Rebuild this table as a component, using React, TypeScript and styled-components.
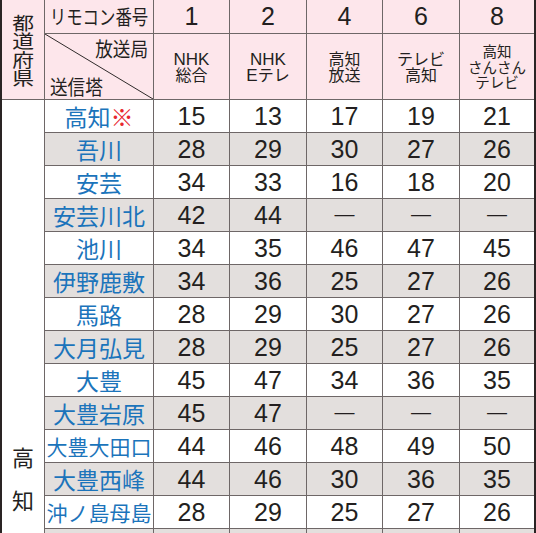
import React from "react";
import styled, { createGlobalStyle } from "styled-components";

const GlobalStyle = createGlobalStyle`
  html, body {
    margin: 0;
    padding: 0;
    overflow: hidden;
    background: #ffffff;
  }
`;

const LINE = "#6e6767";
const PINK = "#fde6eb";
const GRAY = "#e3dfdd";
const INK = "#231f20";
const BLUE = "#1b74bb";
const JP = `"Noto Sans CJK JP", "Noto Sans", sans-serif`;
const NUM = `"Liberation Sans", Arial, sans-serif`;

const Table = styled.div`
  width: 536px;
  box-sizing: border-box;
  display: grid;
  grid-template-columns: 42px 108px 75px 76px 75px 76px 74px;
  grid-template-rows: 33px 65px repeat(14, 32px);
  gap: 1px;
  background: ${LINE};
  border-left: 2px solid #2a2424;
  border-right: 2px solid #2a2424;
`;

const HeadCell = styled.div<{ $rowSpan?: number }>`
  background: ${PINK};
  display: flex;
  align-items: center;
  justify-content: center;
  color: ${INK};
  grid-row: span ${(p) => p.$rowSpan ?? 1};
  position: relative;
`;

const PrefHead = styled.div`
  display: flex;
  flex-direction: column;
  align-items: center;
  font-family: ${JP};
  font-size: 18.5px;
  color: ${INK};
`;

const PrefChar = styled.span`
  display: block;
  height: 18.5px;
  line-height: 18.5px;
  transform: scaleX(1.18);
`;

const RemoconLabel = styled.span`
  font-family: ${JP};
  font-size: 20px;
  line-height: 1;
  display: inline-block;
  transform: scaleX(0.82);
  white-space: nowrap;
`;

const ChannelNo = styled.span`
  font-family: ${NUM};
  font-size: 25px;
  line-height: 1;
`;

const Station = styled.div<{ $small?: boolean }>`
  display: flex;
  flex-direction: column;
  align-items: center;
  font-family: ${JP};
  font-size: ${(p) => (p.$small ? "14.5px" : "16px")};
  text-align: center;
`;

const StationLine = styled.span`
  display: block;
  height: 15.5px;
  line-height: 15.5px;
  white-space: nowrap;
`;

const Latin = styled.span`
  font-family: ${NUM};
  font-size: 17px;
`;

const DiagCell = styled.div`
  background: ${PINK};
  position: relative;
  font-family: ${JP};
  color: ${INK};
  display: flex;
  flex-direction: column;
  justify-content: space-between;
  padding: 5px 5px 2px 5px;
`;

const DiagLine = styled.svg`
  position: absolute;
  inset: 0;
  width: 100%;
  height: 100%;
`;

const DiagLabel = styled.span<{ $right?: boolean }>`
  font-size: 20px;
  line-height: 1;
  align-self: ${(p) => (p.$right ? "flex-end" : "flex-start")};
  transform: scaleX(0.88);
  transform-origin: ${(p) => (p.$right ? "right" : "left")} center;
  position: relative;
`;

const PrefBody = styled.div`
  background: #ffffff;
  grid-row: span 14;
  font-family: ${JP};
  font-size: 22px;
  line-height: 43px;
  color: ${INK};
  text-align: center;
  padding-top: 335px;
`;

const NameCell = styled.div<{ $gray: boolean; $tight?: boolean }>`
  background: ${(p) => (p.$gray ? GRAY : "#ffffff")};
  display: flex;
  align-items: center;
  justify-content: center;
  font-family: ${JP};
  font-size: ${(p) => (p.$tight ? "21px" : "23px")};
  line-height: 1;
  color: ${BLUE};
  white-space: nowrap;
`;

const Mark = styled.span`
  color: #e8262d;
`;

const ValueCell = styled.div<{ $gray: boolean }>`
  background: ${(p) => (p.$gray ? GRAY : "#ffffff")};
  display: flex;
  align-items: center;
  justify-content: center;
  font-family: ${NUM};
  font-size: 25px;
  line-height: 1;
  color: ${INK};
`;

const Dash = styled.span`
  font-size: 20px;
  position: relative;
  top: -1px;
`;

type Channel = { no: string; lines: React.ReactNode[]; small?: boolean };

const channels: Channel[] = [
  { no: "1", lines: [<Latin>NHK</Latin>, "総合"] },
  { no: "2", lines: [<Latin>NHK</Latin>, <><Latin>E</Latin>テレ</>] },
  { no: "4", lines: ["高知", "放送"] },
  { no: "6", lines: ["テレビ", "高知"] },
  { no: "8", lines: ["高知", "さんさん", "テレビ"], small: true },
];

type Row = { name: string; mark?: boolean; values: (number | null)[] };

const rows: Row[] = [
  { name: "高知", mark: true, values: [15, 13, 17, 19, 21] },
  { name: "吾川", values: [28, 29, 30, 27, 26] },
  { name: "安芸", values: [34, 33, 16, 18, 20] },
  { name: "安芸川北", values: [42, 44, null, null, null] },
  { name: "池川", values: [34, 35, 46, 47, 45] },
  { name: "伊野鹿敷", values: [34, 36, 25, 27, 26] },
  { name: "馬路", values: [28, 29, 30, 27, 26] },
  { name: "大月弘見", values: [28, 29, 25, 27, 26] },
  { name: "大豊", values: [45, 47, 34, 36, 35] },
  { name: "大豊岩原", values: [45, 47, null, null, null] },
  { name: "大豊大田口", values: [44, 46, 48, 49, 50] },
  { name: "大豊西峰", values: [44, 46, 30, 36, 35] },
  { name: "沖ノ島母島", values: [28, 29, 25, 27, 26] },
  { name: "", values: [null, null, null, null, null] },
];

const App = () => {
  return (
    <>
      <GlobalStyle />
      <Table>
        <HeadCell $rowSpan={2}>
          <PrefHead>
            {"都道府県".split("").map((ch) => (
              <PrefChar key={ch}>{ch}</PrefChar>
            ))}
          </PrefHead>
        </HeadCell>
        <HeadCell>
          <RemoconLabel>リモコン番号</RemoconLabel>
        </HeadCell>
        {channels.map((c) => (
          <HeadCell key={c.no}>
            <ChannelNo>{c.no}</ChannelNo>
          </HeadCell>
        ))}

        <DiagCell>
          <DiagLine viewBox="0 0 108 65" preserveAspectRatio="none">
            <line x1="0" y1="0" x2="108" y2="65" stroke="#2f2a2a" strokeWidth="1" />
          </DiagLine>
          <DiagLabel $right>放送局</DiagLabel>
          <DiagLabel>送信塔</DiagLabel>
        </DiagCell>
        {channels.map((c) => (
          <HeadCell key={"n" + c.no}>
            <Station $small={c.small}>
              {c.lines.map((l, k) => (
                <StationLine key={k}>{l}</StationLine>
              ))}
            </Station>
          </HeadCell>
        ))}

        <PrefBody>
          高<br />知
        </PrefBody>
        {rows.map((r, i) => {
          const gray = i % 2 === 1;
          return (
            <React.Fragment key={i}>
              <NameCell $gray={gray} $tight={r.name.length > 4}>
                {r.name}
                {r.mark && <Mark>※</Mark>}
              </NameCell>
              {r.values.map((v, j) => (
                <ValueCell key={j} $gray={gray}>
                  {v === null ? (r.name ? <Dash>—</Dash> : null) : v}
                </ValueCell>
              ))}
            </React.Fragment>
          );
        })}
      </Table>
    </>
  );
};

export default App;
